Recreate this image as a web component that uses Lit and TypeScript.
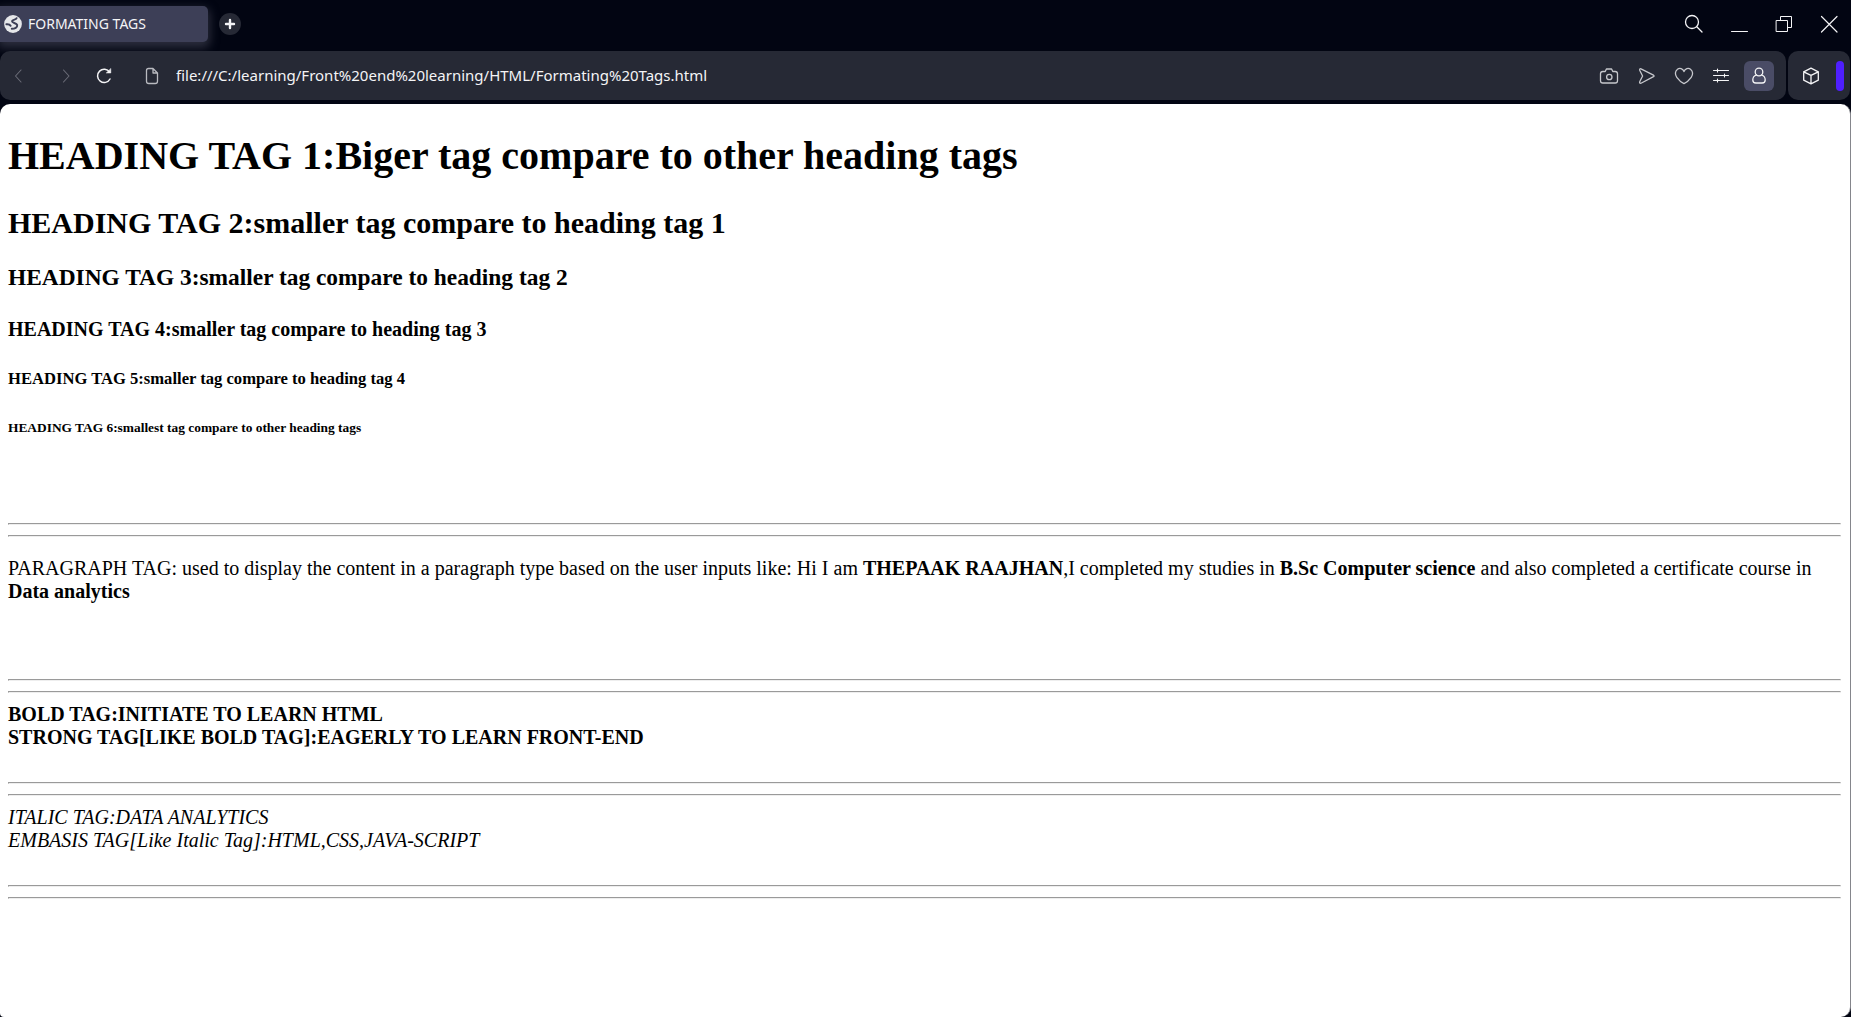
import { LitElement, html, css, svg } from "lit";
import { customElement, property } from "lit/decorators.js";

const icons = {
  search: svg`<circle cx="8" cy="8" r="6.5"/><path d="M12.8 12.8L18 18"/>`,
  minimize: svg`<path d="M2.5 17.5H18.5" stroke-width="1"/>`,
  restore: svg`<path d="M2.5 6.5H13.5V17.5H2.5ZM6.5 6.5V2.5H17.5V13.5H13.5" stroke-width="1"/>`,
  close: svg`<path d="M2.5 2.5L18 18M18 2.5L2.5 18" stroke-width="1.2"/>`,
  back: svg`<path d="M12 4L6.5 10L12 16" stroke-width="1.1"/>`,
  forward: svg`<path d="M7.5 4L13 10L7.5 16" stroke-width="1.1"/>`,
  reload: svg`<path d="M15.6 6.2A6.6 6.6 0 1 0 16 13" stroke-width="1.5"/><path d="M12.5 7H16.8V2.8Z" fill="currentColor" stroke-width=".5"/>`,
  file: svg`<path d="M6.5 2.5H11L15.5 7V15.2Q15.5 17.5 13.2 17.5H6.8Q4.5 17.5 4.5 15.2V4.5Q4.5 2.5 6.5 2.5ZM11 2.5V7H15.5"/>`,
  camera: svg`<path d="M6.2 5.5L7.4 3H12.6L13.8 5.5H16.2Q18.5 5.5 18.5 7.8V14.7Q18.5 17 16.2 17H3.8Q1.5 17 1.5 14.7V7.8Q1.5 5.5 3.8 5.5Z"/><circle cx="10.3" cy="11" r="2.7"/>`,
  send: svg`<path d="M4 2.8L16.5 9.2Q17.6 9.9 16.5 10.6L4 17.2Q2.2 17.6 2.7 15.8L5.6 10L2.7 4.2Q2.4 2.4 4 2.8Z"/>`,
  heart: svg`<path d="M10 5.6C9 2.4 5.6 1.7 3.5 3.2C.8 5.2 .9 8.8 2.8 11.4C4.6 13.9 7 16.4 10 17.6C13 16.4 15.4 13.9 17.2 11.4C19.1 8.8 19.2 5.2 16.5 3.2C14.4 1.7 11 2.4 10 5.6Z"/>`,
  sliders: svg`<path d="M1.5 4.5H16.5M1.5 9.5H16.5M1.5 14.5H16.5M5.5 3V6M12.5 8V11M5.5 13V16" stroke-width="1.1"/>`,
  person: svg`<circle cx="10" cy="6" r="3.8"/><path d="M7.4 9C5 9.8 3.8 11.8 3.8 14C3.8 16 5 17 6.8 17H13.2C15 17 16.2 16 16.2 14C16.2 11.8 15 9.8 12.6 9"/>`,
  cube: svg`<path d="M10 2.2L17.3 5.8V14.2L10 17.8L2.7 14.2V5.8ZM2.7 5.8L10 9.4L17.3 5.8M10 9.4V17.8"/>`,
  plus: svg`<path d="M10 6V14M6 10H14" stroke-width="2.4"/>`,
  globe: svg`<circle cx="10" cy="10" r="8.9" fill="#e6e7ea" stroke="none"/><path d="M13.6 4.2C13.4 6 9.4 5.2 9 7.2C8.8 9.2 13.6 8.6 14.2 11C14.6 13.4 11.8 14.8 8.8 14.8M3.4 10.2C5.4 10 7 10.6 7.6 11.8" stroke="#3d3f57" stroke-width="2"/>`,
};

type IconName = keyof typeof icons;

@customElement("line-icon")
class LineIcon extends LitElement {
  static styles = css`
    :host {
      display: block;
      flex: none;
      width: 20px;
      height: 20px;
    }
    .glyph {
      display: block;
      width: 100%;
      height: 100%;
      fill: none;
      stroke: currentColor;
      stroke-width: 1.3;
      stroke-linecap: round;
      stroke-linejoin: round;
    }
  `;
  @property() name: IconName = "search";
  render() {
    return html`<svg class="glyph" viewBox="0 0 20 20" aria-hidden="true">${icons[this.name]}</svg>`;
  }
}

@customElement("browser-bar")
class BrowserBar extends LitElement {
  static styles = css`
    :host {
      display: block;
      font-family: "Noto Sans", "Open Sans", sans-serif;
      font-size: 14px;
      color: #f4f4f6;
    }
    button {
      display: flex;
      align-items: center;
      justify-content: center;
      flex: none;
      padding: 0;
      border: 0;
      background: none;
      color: inherit;
      font: inherit;
    }
    .strip {
      display: flex;
      align-items: center;
      height: 51px;
    }
    .tab {
      justify-content: flex-start;
      gap: 5px;
      width: 208px;
      height: 36px;
      margin-bottom: 4px;
      padding-left: 3px;
      border-radius: 0 5px 5px 0;
      background: #3d3f57;
      box-shadow: 0 4px 10px 2px #2b2d3c;
    }
    .add {
      width: 22px;
      height: 22px;
      margin: 0 auto 4px 11px;
      border-radius: 50%;
      background: #262935;
    }
    .window {
      width: 45px;
      height: 40px;
      margin-bottom: 4px;
    }
    .tools {
      position: relative;
      display: flex;
      gap: 2px;
      padding-right: 1px;
    }
    .panel {
      display: flex;
      align-items: center;
      box-sizing: border-box;
      height: 49px;
      border-radius: 10px;
      background: #262935;
    }
    .main {
      flex: 1;
      padding-right: 12px;
    }
    .nav {
      width: 38px;
      height: 38px;
    }
    .dim {
      color: #6b6d78;
    }
    .forward {
      margin-left: 9px;
    }
    .page {
      margin-left: 19px;
      color: #b9bac0;
    }
    .address {
      flex: 1;
      min-width: 0;
      padding: 0 0 2px;
      margin-left: 14px;
      border: 0;
      outline: 0;
      background: none;
      color: inherit;
      font: inherit;
      font-size: 15px;
    }
    .actions {
      display: flex;
      justify-content: space-between;
      width: 180px;
      color: #c6c7cc;
    }
    .action {
      width: 30px;
      height: 30px;
      border-radius: 6px;
    }
    .bright {
      color: #f4f4f6;
    }
    .active {
      background: #4a4c66;
    }
    .side {
      gap: 10px;
      padding: 0 6px 0 8px;
    }
    .marker {
      width: 8px;
      height: 30px;
      border-radius: 4px;
      background: #4f1fff;
    }
  `;
  render() {
    return html`
      <div class="strip">
        <button class="tab"><line-icon name="globe"></line-icon>FORMATING TAGS</button>
        <button class="add" aria-label="New tab"><line-icon name="plus"></line-icon></button>
        ${(["search", "minimize", "restore", "close"] as IconName[]).map(
          (name) => html`<button class="window" aria-label=${name}><line-icon name=${name}></line-icon></button>`,
        )}
      </div>
      <div class="tools">
        <div class="panel main">
          <button class="nav dim" aria-label="Back"><line-icon name="back"></line-icon></button>
          <button class="nav dim forward" aria-label="Forward"><line-icon name="forward"></line-icon></button>
          <button class="nav" aria-label="Reload"><line-icon name="reload"></line-icon></button>
          <line-icon class="page" name="file"></line-icon>
          <input
            class="address"
            aria-label="Address"
            value="file:///C:/learning/Front%20end%20learning/HTML/Formating%20Tags.html"
          />
          <div class="actions">
            <button class="action" aria-label="Snapshot"><line-icon name="camera"></line-icon></button>
            <button class="action" aria-label="Send"><line-icon name="send"></line-icon></button>
            <button class="action" aria-label="Bookmark"><line-icon name="heart"></line-icon></button>
            <button class="action bright" aria-label="Easy setup"><line-icon name="sliders"></line-icon></button>
            <button class="action bright active" aria-label="Profile"><line-icon name="person"></line-icon></button>
          </div>
        </div>
        <div class="panel side">
          <button class="action bright" aria-label="Extensions"><line-icon name="cube"></line-icon></button>
          <div class="marker"></div>
        </div>
      </div>
    `;
  }
}

@customElement("app-root")
class AppRoot extends LitElement {
  static styles = css`
    :host {
      display: flex;
      flex-direction: column;
      gap: 4px;
      min-height: 100vh;
      background: #020512;
    }
    .document {
      flex: 1;
      display: flow-root;
      padding: 1px 9px 0 8px;
      border-right: 1px solid #85868c;
      border-radius: 10px 10px 10px 4px;
      background: #fff;
      color: #000;
      font-family: "Liberation Serif", "Times New Roman", serif;
      font-size: 20px;
    }
  `;
  render() {
    return html`
      <browser-bar></browser-bar>
      <main class="document">
        <h1>HEADING TAG 1:Biger tag compare to other heading tags</h1>
        <h2>HEADING TAG 2:smaller tag compare to heading tag 1</h2>
        <h3>HEADING TAG 3:smaller tag compare to heading tag 2</h3>
        <h4>HEADING TAG 4:smaller tag compare to heading tag 3</h4>
        <h5>HEADING TAG 5:smaller tag compare to heading tag 4</h5>
        <h6>HEADING TAG 6:smallest tag compare to other heading tags</h6>
        <br /><br />
        <hr />
        <hr />
        <p>
          PARAGRAPH TAG: used to display the content in a paragraph type based on the user inputs like: Hi I am
          <b>THEPAAK RAAJHAN</b>,I completed my studies in <b>B.Sc Computer science</b> and also completed a
          certificate course in <b>Data analytics</b>
        </p>
        <br /><br />
        <hr />
        <hr />
        <b>BOLD TAG:INITIATE TO LEARN HTML</b><br />
        <strong>STRONG TAG[LIKE BOLD TAG]:EAGERLY TO LEARN FRONT-END</strong><br />
        <br />
        <hr />
        <hr />
        <i>ITALIC TAG:DATA ANALYTICS</i><br />
        <em>EMBASIS TAG[Like Italic Tag]:HTML,CSS,JAVA-SCRIPT</em><br />
        <br />
        <hr />
        <hr />
      </main>
    `;
  }
}
